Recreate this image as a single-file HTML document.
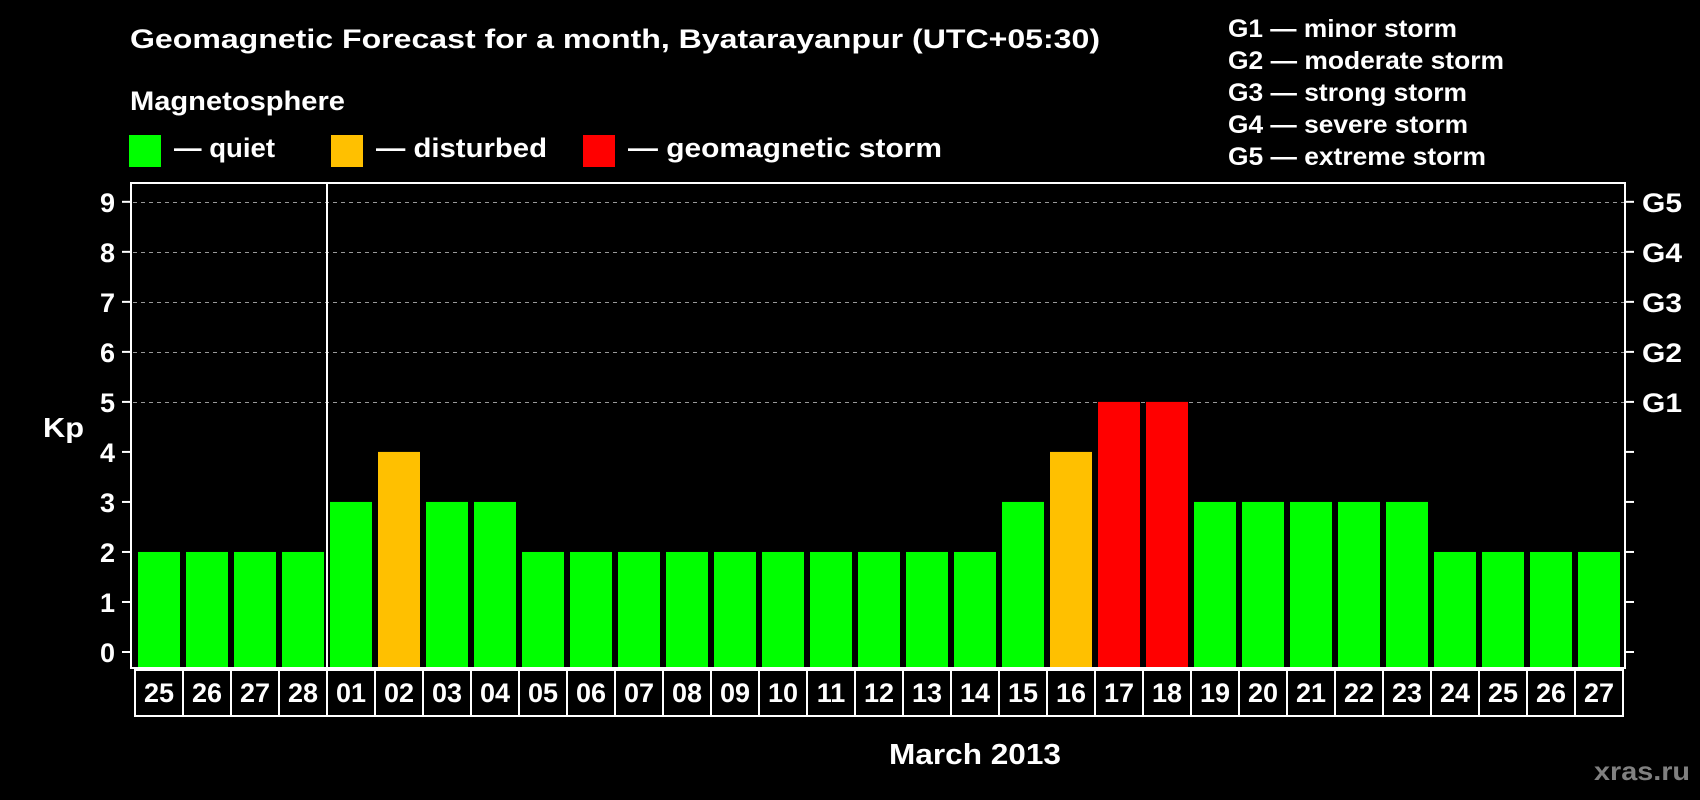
<!DOCTYPE html>
<html><head><meta charset="utf-8"><style>
html,body{margin:0;padding:0;background:#000;}
svg{display:block;font-family:"Liberation Sans",Arial,sans-serif;font-weight:bold;}
</style></head><body>
<svg width="1700" height="800" viewBox="0 0 1700 800" xmlns="http://www.w3.org/2000/svg">
<rect width="1700" height="800" fill="#000"/>
<g fill="#fff">
<text x="130" y="48" font-size="27" textLength="970" lengthAdjust="spacingAndGlyphs">Geomagnetic Forecast for a month, Byatarayanpur (UTC+05:30)</text>
<text x="130" y="110" font-size="27" textLength="215" lengthAdjust="spacingAndGlyphs">Magnetosphere</text>
<text x="174" y="157" font-size="27" textLength="101" lengthAdjust="spacingAndGlyphs">— quiet</text>
<text x="376" y="157" font-size="27" textLength="171" lengthAdjust="spacingAndGlyphs">— disturbed</text>
<text x="628" y="157" font-size="27" textLength="314" lengthAdjust="spacingAndGlyphs">— geomagnetic storm</text>
<text x="1228" y="37" font-size="25" textLength="229" lengthAdjust="spacingAndGlyphs">G1 — minor storm</text>
<text x="1228" y="69" font-size="25" textLength="276" lengthAdjust="spacingAndGlyphs">G2 — moderate storm</text>
<text x="1228" y="101" font-size="25" textLength="239" lengthAdjust="spacingAndGlyphs">G3 — strong storm</text>
<text x="1228" y="133" font-size="25" textLength="240" lengthAdjust="spacingAndGlyphs">G4 — severe storm</text>
<text x="1228" y="165" font-size="25" textLength="258" lengthAdjust="spacingAndGlyphs">G5 — extreme storm</text>
</g>
<rect x="129" y="135" width="32" height="32" fill="#00ff00"/>
<rect x="331" y="135" width="32" height="32" fill="#ffc000"/>
<rect x="583" y="135" width="32" height="32" fill="#ff0000"/>
<g id="grid" stroke="#999" stroke-width="1" stroke-dasharray="4,4"></g>
<g id="bars"></g>
<rect x="131" y="183" width="1494" height="485" fill="none" stroke="#fff" stroke-width="2"/>
<line x1="327" y1="183" x2="327" y2="668" stroke="#fff" stroke-width="2"/>
<g id="ticks" stroke="#fff" stroke-width="2"></g>
<g id="lab" fill="#fff"></g>
<text x="43" y="437" font-size="28" fill="#fff" textLength="41" lengthAdjust="spacingAndGlyphs">Kp</text>
<rect x="135" y="670" width="1488" height="46" fill="none" stroke="#fff" stroke-width="2"/>
<g id="dates" fill="#fff"></g>
<text x="889" y="764" font-size="29" fill="#fff" textLength="172" lengthAdjust="spacingAndGlyphs">March 2013</text>
<text x="1594" y="780" font-size="26" fill="#808080" textLength="96" lengthAdjust="spacingAndGlyphs">xras.ru</text>
</svg>
<script>
(function(){
var ns="http://www.w3.org/2000/svg";
function el(t,a,p,txt){var e=document.createElementNS(ns,t);for(var k in a)e.setAttribute(k,a[k]);if(txt!=null)e.textContent=txt;document.getElementById(p).appendChild(e);}
var vals=[2,2,2,2,3,4,3,3,2,2,2,2,2,2,2,2,2,2,3,4,5,5,3,3,3,3,3,2,2,2,2];
var days=["25","26","27","28","01","02","03","04","05","06","07","08","09","10","11","12","13","14","15","16","17","18","19","20","21","22","23","24","25","26","27"];
var Y0=652,U=50.02;
for(var i=0;i<31;i++){var v=vals[i];var c=v>=5?"#ff0000":(v==4?"#ffc000":"#00ff00");var ty=Y0-v*U;
el("rect",{x:138+48*i,y:ty,width:42,height:667-ty,fill:c},"bars");
if(i>0)el("line",{x1:135+48*i,y1:670,x2:135+48*i,y2:716},"ticks");
el("text",{x:159+48*i,y:702,"font-size":27,"text-anchor":"middle"},"dates",days[i]);}
for(var k=0;k<=9;k++){var y=Y0-k*U;
el("line",{x1:122,y1:y,x2:131,y2:y},"ticks");
el("line",{x1:1625,y1:y,x2:1634,y2:y},"ticks");
el("text",{x:115,y:y+10,"font-size":27,"text-anchor":"end"},"lab",""+k);
if(k>=5){el("line",{x1:133,y1:Math.round(y)+0.5,x2:1624,y2:Math.round(y)+0.5},"grid");
el("text",{x:1642,y:y+10,"font-size":27,textLength:40,lengthAdjust:"spacingAndGlyphs"},"lab","G"+(k-4));}}
})();
</script>
</body></html>
